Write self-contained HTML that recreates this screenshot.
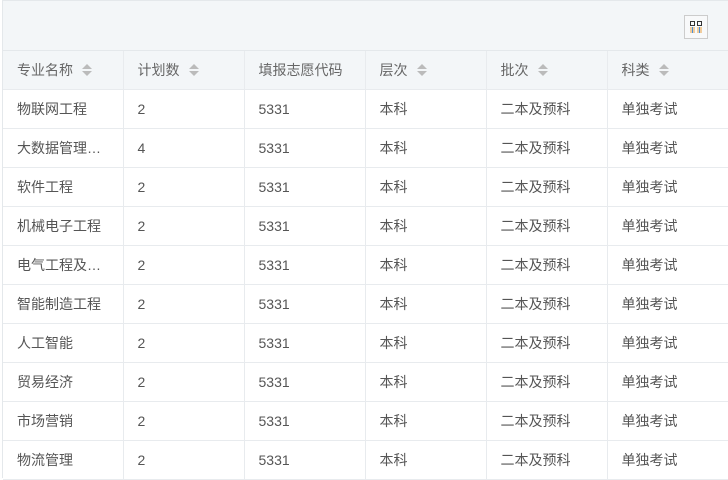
<!DOCTYPE html><html><head><style>
body{margin:0;width:728px;height:478px;overflow:hidden;background:#fff;font-family:"Liberation Sans","Noto Sans CJK SC",sans-serif;font-size:14px;color:#555}
.wrap{position:absolute;left:2px;top:0;width:726px;height:478px;border-left:1px solid #e4e8eb;border-top:1px solid #e4e8eb;box-sizing:border-box}
.tb{height:50px;background:#f3f6f8;border-bottom:1px solid #e4e8eb;box-sizing:border-box;position:relative}
.btn{position:absolute;left:681px;top:14px;width:24px;height:24px;border:1px solid #ccc;box-sizing:border-box;background:#f8f9fa}
table{border-collapse:collapse;table-layout:fixed;width:726px}
td,th{border-right:1px solid #e8ebee;border-bottom:1px solid #e8ebee;height:38px;padding:0 0 0 14px;text-align:left;font-weight:normal;white-space:nowrap;overflow:hidden}
th{background:#f3f6f8;color:#666}
.s{display:inline-block;margin-left:9px;vertical-align:middle;width:10px;height:12px;position:relative;top:-1px}
.s:before,.s:after{content:"";position:absolute;left:0;border-left:5px solid transparent;border-right:5px solid transparent}
.s:before{top:0;border-bottom:5px solid #bbb}.s:after{bottom:0;border-top:5px solid #bbb}
</style></head><body><div class="wrap">
<div class="tb"><div class="btn"><svg width="22" height="22" viewBox="0 0 22 22"><rect x="5.5" y="5.5" width="4" height="4" fill="none" stroke="#333"/><rect x="12.5" y="5.5" width="4" height="4" fill="none" stroke="#333"/><path d="M6 11v6M9 11v6M13 11v6M16 11v6" stroke="#e8a040" stroke-width="1"/><path d="M7.5 11v6M14.5 11v6" stroke="#4a90d9"/></svg></div></div>
<table><colgroup><col style="width:120px"><col style="width:121px"><col style="width:121px"><col style="width:121px"><col style="width:121px"><col style="width:122px"></colgroup>
<tr><th>专业名称<i class="s"></i></th><th>计划数<i class="s"></i></th><th>填报志愿代码</th><th>层次<i class="s"></i></th><th>批次<i class="s"></i></th><th>科类<i class="s"></i></th></tr>
<tr><td>物联网工程</td><td>2</td><td>5331</td><td>本科</td><td>二本及预科</td><td>单独考试</td></tr>
<tr><td>大数据管理…</td><td>4</td><td>5331</td><td>本科</td><td>二本及预科</td><td>单独考试</td></tr>
<tr><td>软件工程</td><td>2</td><td>5331</td><td>本科</td><td>二本及预科</td><td>单独考试</td></tr>
<tr><td>机械电子工程</td><td>2</td><td>5331</td><td>本科</td><td>二本及预科</td><td>单独考试</td></tr>
<tr><td>电气工程及…</td><td>2</td><td>5331</td><td>本科</td><td>二本及预科</td><td>单独考试</td></tr>
<tr><td>智能制造工程</td><td>2</td><td>5331</td><td>本科</td><td>二本及预科</td><td>单独考试</td></tr>
<tr><td>人工智能</td><td>2</td><td>5331</td><td>本科</td><td>二本及预科</td><td>单独考试</td></tr>
<tr><td>贸易经济</td><td>2</td><td>5331</td><td>本科</td><td>二本及预科</td><td>单独考试</td></tr>
<tr><td>市场营销</td><td>2</td><td>5331</td><td>本科</td><td>二本及预科</td><td>单独考试</td></tr>
<tr><td>物流管理</td><td>2</td><td>5331</td><td>本科</td><td>二本及预科</td><td>单独考试</td></tr>
</table></div></body></html>
